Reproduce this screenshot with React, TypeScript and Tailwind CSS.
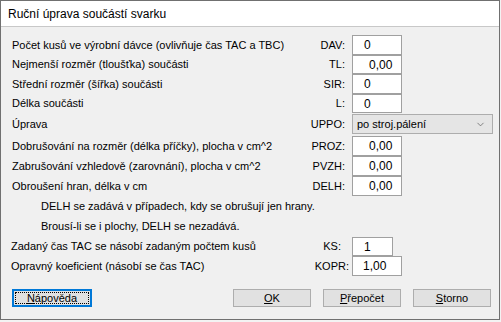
import { ChevronDown } from 'lucide-react'

const font = { fontFamily: '"Liberation Sans", Arial, sans-serif' }

function Field({ value, pad = 'pl-[11px]', w = 'w-[50px]' }: { value: string; pad?: string; w?: string }) {
  return (
    <div className={`${w} h-full bg-white border border-[#a0a0a0] flex items-center ${pad} text-[12px] text-black`}>
      {value}
    </div>
  )
}

const rows = [
  { label: 'Počet kusů ve výrobní dávce (ovlivňuje čas TAC a TBC)', code: 'DAV:', value: '0', h: 'h-[20px]', pad: 'pl-[11px]' },
  { label: 'Nejmenší rozměr (tloušťka) součásti', code: 'TL:', value: '0,00', h: 'h-[19px]', pad: 'pl-[16px]' },
  { label: 'Střední rozměr (šířka) součásti', code: 'SIR:', value: '0', h: 'h-[20px]', pad: 'pl-[11px]' },
  { label: 'Délka součásti', code: 'L:', value: '0', h: 'h-[19px]', pad: 'pl-[11px]' },
]

const rows2 = [
  { label: 'Dobrušování na rozměr (délka příčky), plocha v cm^2', code: 'PROZ:', value: '0,00' },
  { label: 'Zabrušování vzhledově (zarovnání), plocha v cm^2', code: 'PVZH:', value: '0,00' },
  { label: 'Obroušení hran, délka v cm', code: 'DELH:', value: '0,00' },
]

function Btn({ children, focus = false, className = '' }: { children: React.ReactNode; focus?: boolean; className?: string }) {
  if (focus) {
    return (
      <div className={`h-[18px] border-2 border-[#0078d7] bg-[#e1e1e1] p-[1px] ${className}`}>
        <div className="h-full border border-dotted border-black flex items-center justify-center">{children}</div>
      </div>
    )
  }
  return (
    <div className={`h-[18px] border border-[#adadad] bg-[#e1e1e1] flex items-center justify-center ${className}`}>
      {children}
    </div>
  )
}

export default function App() {
  return (
    <div className="w-[501px] h-[322px] bg-[#f3f3f3] text-black" style={font}>
      <div className="w-[500px] h-[320px] border border-[#707070] bg-[#f0f0f0] flex flex-col">
        {/* Title bar */}
        <div className="h-[26px] bg-white border-b border-[#c8c8c8] flex items-center pl-[7px] text-[12px]">
          Ruční úprava součástí svarku
        </div>

        <div className="flex flex-col pt-[8px] text-[11px] whitespace-nowrap">
          {rows.map((r) => (
            <div key={r.code} className={`${r.h} flex items-center`}>
              <div className="w-[291px] pl-[11px]">{r.label}</div>
              <div className="w-[53px] text-right">{r.code}</div>
              <div className="ml-[7px] h-full">
                <Field value={r.value} pad={r.pad} />
              </div>
            </div>
          ))}

          {/* UPPO select */}
          <div className="h-[20px] mt-[1px] flex items-center">
            <div className="w-[291px] pl-[11px]">Úprava</div>
            <div className="w-[53px] text-right">UPPO:</div>
            <div className="ml-[7px] h-full w-[141px] bg-[#e5e5e5] border border-[#adadad] flex items-center justify-between pl-[4px] pr-[6px]">
              <span>po stroj.pálení</span>
              <ChevronDown size={11} strokeWidth={1.5} className="text-[#555]" />
            </div>
          </div>

          <div className="h-[2px]" />

          {rows2.map((r) => (
            <div key={r.code} className="h-[20px] flex items-center">
              <div className="w-[291px] pl-[11px]">{r.label}</div>
              <div className="w-[53px] text-right">{r.code}</div>
              <div className="ml-[7px] h-full">
                <Field value={r.value} pad="pl-[16px]" />
              </div>
            </div>
          ))}

          <div className="h-[20px] flex items-center pl-[40px]">DELH se zadává v případech, kdy se obrušují jen hrany.</div>
          <div className="h-[20px] flex items-center pl-[40px]">Brousí-li se i plochy, DELH se nezadává.</div>

          <div className="h-[19px] mt-[1px] flex items-center">
            <div className="w-[291px] pl-[10px]">Zadaný čas TAC se násobí zadaným počtem kusů</div>
            <div className="w-[49px] text-right">KS:</div>
            <div className="ml-[11px] h-full">
              <Field value="1" w="w-[41px]" pad="pl-[11px]" />
            </div>
          </div>
          <div className="h-[20px] flex items-center">
            <div className="w-[291px] pl-[10px]">Opravný koeficient (násobí se čas TAC)</div>
            <div className="w-[57px] text-right">KOPR:</div>
            <div className="ml-[3px] h-full">
              <Field value="1,00" pad="pl-[10px]" />
            </div>
          </div>

          {/* Buttons */}
          <div className="flex items-center mt-[13px] pl-[11px]">
            <Btn focus className="w-[80px]">
              <span><u>N</u>ápověda</span>
            </Btn>
            <Btn className="w-[78px] ml-[141px]">
              <span><u>O</u>K</span>
            </Btn>
            <Btn className="w-[78px] ml-[12px]">
              <span><u>P</u>řepočet</span>
            </Btn>
            <Btn className="w-[78px] ml-[12px]">
              <span><u>S</u>torno</span>
            </Btn>
          </div>
        </div>
      </div>
    </div>
  )
}
